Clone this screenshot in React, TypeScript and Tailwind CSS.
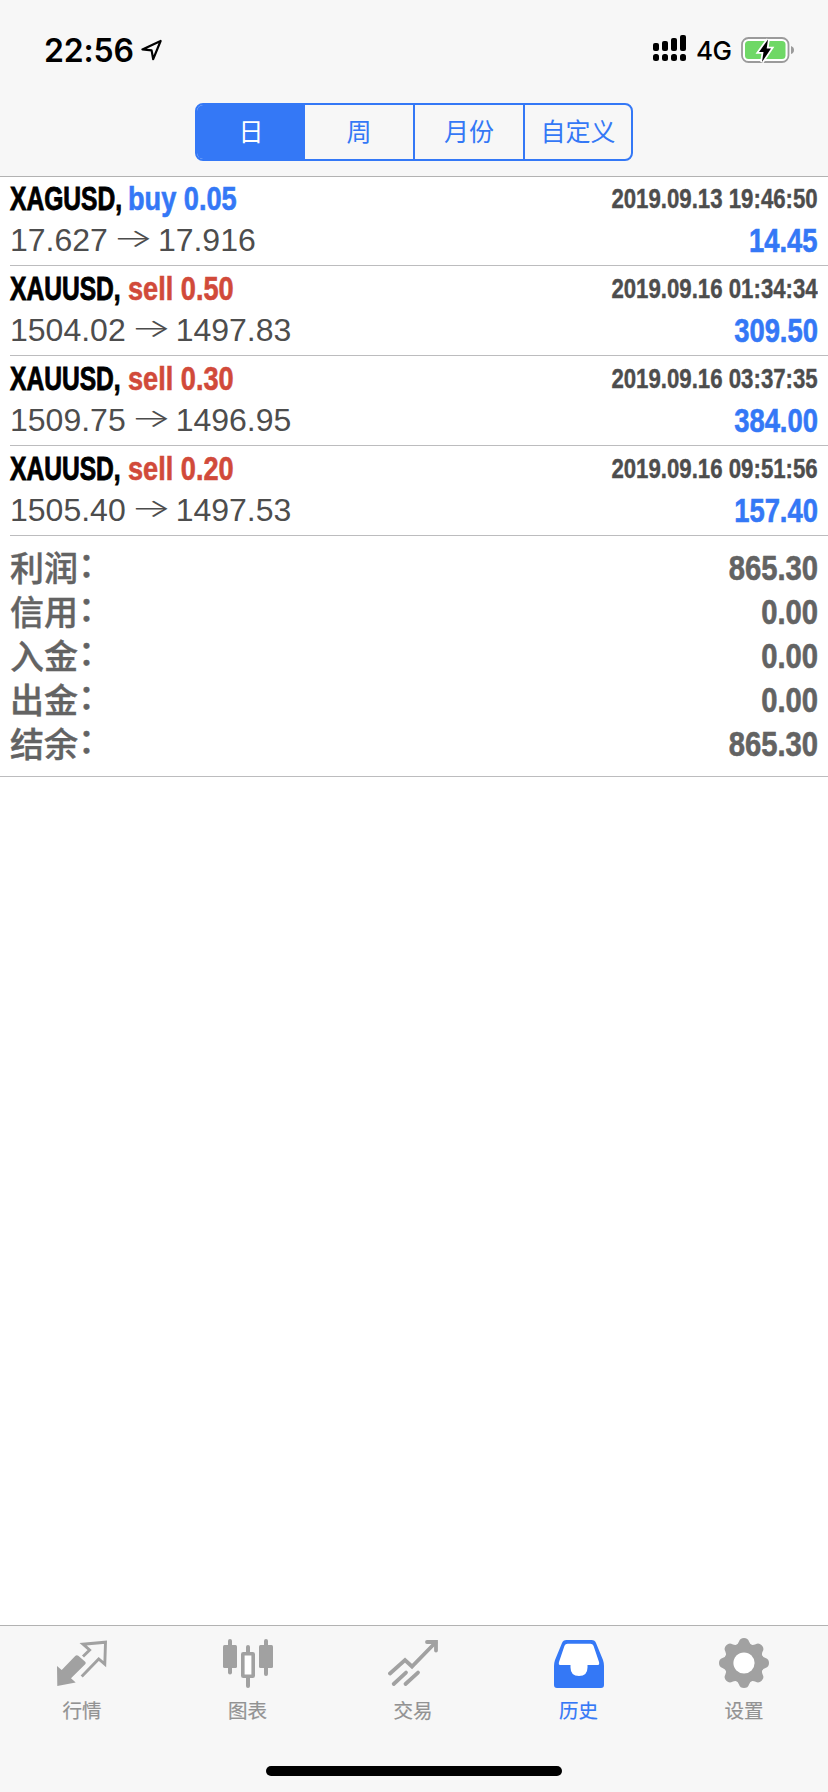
import type { ReactNode } from 'react';

type Side = 'buy' | 'sell';

interface Deal {
  symbol: string;
  side: Side;
  volume: string;
  open: string;
  close: string;
  time: string;
  profit: string;
}

const periods = [
  { label: '日', className: 'w-[108px] bg-[#3478f6] text-white' },
  { label: '周', className: 'w-[110px] border-r-2 border-[#3478f6] text-[#3478f6]' },
  { label: '月份', className: 'w-[110px] border-r-2 border-[#3478f6] text-[#3478f6]' },
  { label: '自定义', className: 'flex-1 text-[#3478f6]' },
];

const deals: Deal[] = [
  { symbol: 'XAGUSD', side: 'buy', volume: '0.05', open: '17.627', close: '17.916', time: '2019.09.13 19:46:50', profit: '14.45' },
  { symbol: 'XAUUSD', side: 'sell', volume: '0.50', open: '1504.02', close: '1497.83', time: '2019.09.16 01:34:34', profit: '309.50' },
  { symbol: 'XAUUSD', side: 'sell', volume: '0.30', open: '1509.75', close: '1496.95', time: '2019.09.16 03:37:35', profit: '384.00' },
  { symbol: 'XAUUSD', side: 'sell', volume: '0.20', open: '1505.40', close: '1497.53', time: '2019.09.16 09:51:56', profit: '157.40' },
];

const summary = [
  { label: '利润', value: '865.30' },
  { label: '信用', value: '0.00' },
  { label: '入金', value: '0.00' },
  { label: '出金', value: '0.00' },
  { label: '结余', value: '865.30' },
];

function StatusBar() {
  return (
    <div className="flex h-[103px] items-start justify-between pt-[30px] pr-[33px] pl-[44px]">
      <div className="flex h-10 items-center">
        <span className="w-[97px] pt-px font-['Inter',sans-serif] text-[32px] leading-10 font-semibold tracking-[-0.2px] whitespace-nowrap">
          22:56
        </span>
        <svg width="22" height="22" viewBox="0 0 22 22" fill="none" stroke="black" strokeWidth="2.2" strokeLinejoin="round">
          <path d="M1.4 10.4 L19.6 2 L12.2 20.2 L10.6 11.4 Z" />
        </svg>
      </div>
      <div className="flex h-10 items-center">
        <svg width="34" height="28" viewBox="0 0 34 28" className="-mt-[4px]">
          <rect x="0" y="9" width="6" height="8" rx="2" />
          <rect x="9" y="7" width="6" height="10" rx="2" />
          <rect x="18" y="4" width="6" height="13" rx="2" />
          <rect x="27" y="1" width="6" height="16" rx="2" />
          <rect x="0" y="20" width="6" height="7" rx="2.5" />
          <rect x="9" y="20" width="6" height="7" rx="2.5" />
          <rect x="18" y="20" width="6" height="7" rx="2.5" />
          <rect x="27" y="20" width="6" height="7" rx="2.5" />
        </svg>
        <span className="mt-[2px] ml-[9px] w-[45px] font-['Inter',sans-serif] text-[26px] leading-10 font-medium tracking-[-0.5px]">
          4G
        </span>
        <svg width="54" height="26" viewBox="0 0 54 26" className="-mt-px">
          <rect x="1" y="1" width="46.5" height="24" rx="6.5" fill="#fff" stroke="#9b9b9b" strokeWidth="1.8" />
          <rect x="4" y="4" width="40.5" height="18" rx="3.5" fill="#6fd866" />
          <path d="M50 9 Q53 10 53 13 Q53 16 50 17 Z" fill="#9b9b9b" />
          <path
            d="M27 2.5 L18 15 L22.5 15 L21 25 L30 11.5 L25.7 11.5 Z"
            fill="black"
            stroke="white"
            strokeWidth="3.6"
            paintOrder="stroke"
          />
        </svg>
      </div>
    </div>
  );
}

function PeriodTabs() {
  return (
    <div className="mx-auto flex h-[58px] w-[438px] overflow-hidden rounded-[8px] border-2 border-[#3478f6] text-[25px]">
      {periods.map(({ label, className }) => (
        <button key={label} className={`pt-[2px] ${className}`}>
          {label}
        </button>
      ))}
    </div>
  );
}

function DealRow({ deal }: { deal: Deal }) {
  return (
    <div className="ml-[10px] flex h-[90px] justify-between border-b border-[#bcbcbe] pr-[10px] first:h-[89px]">
      <div className="flex flex-col justify-end pb-1">
        {/* Condensed bold: the regular face squeezed horizontally */}
        <div className="flex text-[33px] leading-[40px] font-bold whitespace-nowrap">
          <span className="w-[118px] origin-left scale-x-[0.745] [-webkit-text-stroke:0.9px]">{deal.symbol},</span>
          <span
            className={`origin-left scale-x-[0.823] [-webkit-text-stroke:0.6px] ${
              deal.side === 'buy' ? 'text-[#3478f6]' : 'text-[#d14a3a]'
            }`}
          >
            {deal.side} {deal.volume}
          </span>
        </div>
        <div className="mt-px flex text-[32px] leading-[41px] text-[#4d4d4d]">
          {deal.open}
          <span className="w-[50px] -translate-y-[3px] scale-x-[1.35] scale-y-[0.8] text-center font-['Inter',sans-serif] font-light">
            →
          </span>
          {deal.close}
        </div>
      </div>
      <div className="flex flex-col items-end justify-end pb-1 font-bold whitespace-nowrap">
        <div className="origin-right scale-x-[0.823] text-[27px] leading-[41px] text-[#4d4d4d] [-webkit-text-stroke:0.4px]">
          {deal.time}
        </div>
        <div className="origin-right scale-x-[0.83] text-[33px] leading-[41px] text-[#3478f6] [-webkit-text-stroke:0.6px]">
          {deal.profit}
        </div>
      </div>
    </div>
  );
}

function Summary() {
  return (
    <div className="h-[241px] border-b border-[#bcbcbe] px-[10px] pt-[10px] text-[#636363]">
      {summary.map(({ label, value }) => (
        <div key={label} className="flex h-11 items-center justify-between">
          <span className="flex pt-[2px] text-[34px] leading-[44px] font-medium [-webkit-text-stroke:0.4px]">
            {label}
            <span className="-translate-y-[4px]">：</span>
          </span>
          <span className="origin-right scale-x-[0.835] text-[35px] leading-[44px] font-bold [-webkit-text-stroke:0.6px]">
            {value}
          </span>
        </div>
      ))}
    </div>
  );
}

function QuotesIcon() {
  return (
    <svg width="50" height="50" viewBox="0 0 50 50" fill="none">
      <path d="M0 28 L4.7 32 L18.2 18 Q19.7 16.4 21.3 17.8 L28.2 23.8 Q29.4 25 28.2 26.2 L14 40.3 L18.7 44.6 L0.3 48 Z" fill="#a1a1a1" />
      <path d="M26 18.5 L32.6 12 L26 6.2 L48.5 4.2 L47.8 26.2 L41.7 21 L24.7 38.5" stroke="#a1a1a1" strokeWidth="2.9" />
    </svg>
  );
}

function ChartIcon() {
  return (
    <svg width="50" height="50" viewBox="0 0 50 50" fill="#a1a1a1">
      <rect x="0" y="7" width="14" height="23" rx="1.5" />
      <rect x="5" y="1" width="4" height="35.5" rx="2" />
      <rect x="23" y="7" width="4" height="43" rx="2" />
      <rect x="19.8" y="15.8" width="10.4" height="22.4" rx="0.5" fill="#fff" stroke="#a1a1a1" strokeWidth="3.6" />
      <rect x="36" y="7" width="14" height="23" rx="1.5" />
      <rect x="41" y="1" width="4" height="37" rx="2" />
    </svg>
  );
}

function TradeIcon() {
  return (
    <svg width="50" height="50" viewBox="0 0 50 50" fill="none" stroke="#a1a1a1" strokeWidth="3.8" strokeLinecap="round">
      <path d="M2 35.5 L17 22 L24 28.5 L47.5 4.5" />
      <path d="M39 4 H48 V12.5" />
      <path d="M5.7 46 L18 34.6 M17.5 46 L30 34.6" />
    </svg>
  );
}

function HistoryIcon() {
  return (
    <svg width="50" height="50" viewBox="0 0 50 50">
      <path
        d="M12.5 2 H37.5 Q41 2 42 5 L49 22 Q50 25 50 28 V47 Q50 50 47 50 H3 Q0 50 0 47 V28 Q0 25 1 22 L8 5 Q9 2 12.5 2 Z"
        fill="#3478f6"
      />
      <path
        d="M13.5 5.7 H36.5 Q38.7 5.7 39.5 7.7 L45 24 Q45.7 27 44 27 H33.5 V29.5 Q33.5 38 25 38 Q16.5 38 16.5 29.5 V27 H6 Q4.3 27 5 24 L10.5 7.7 Q11.3 5.7 13.5 5.7 Z"
        fill="#fff"
      />
    </svg>
  );
}

function SettingsIcon() {
  const teeth = [0, 45, 90, 135, 180, 225, 270, 315];
  return (
    <svg width="50" height="50" viewBox="0 0 50 50" fill="#a1a1a1">
      <circle cx="25" cy="25" r="19.5" />
      {teeth.map((angle) => (
        <path
          key={angle}
          d="M16.5 7.5 Q19 6.5 20 3.5 Q21 0 25 0 Q29 0 30 3.5 Q31 6.5 33.5 7.5 L30 14 H20 Z"
          transform={`rotate(${angle} 25 25)`}
        />
      ))}
      <circle cx="25" cy="25" r="10.6" fill="#fff" />
    </svg>
  );
}

const tabs: { label: string; icon: ReactNode; active?: boolean }[] = [
  { label: '行情', icon: <QuotesIcon /> },
  { label: '图表', icon: <ChartIcon /> },
  { label: '交易', icon: <TradeIcon /> },
  { label: '历史', icon: <HistoryIcon />, active: true },
  { label: '设置', icon: <SettingsIcon /> },
];

function TabBar() {
  return (
    <nav className="flex h-[167px] flex-col items-center justify-between border-t border-[#b2b2b2] bg-[#f7f7f7] pt-[12px] pb-[16px]">
      <div className="flex w-full justify-between pr-[9px] pl-[7px]">
        {tabs.map(({ label, icon, active }) => (
          <button key={label} className={`flex w-[150px] flex-col items-center ${active ? 'text-[#3478f6]' : 'text-[#929292]'}`}>
            {icon}
            <span className="mt-[8px] text-[19.5px] leading-[30px] [-webkit-text-stroke:0.2px]">{label}</span>
          </button>
        ))}
      </div>
      <div className="h-[10px] w-[296px] rounded-full bg-black" />
    </nav>
  );
}

export default function App() {
  return (
    <div className="flex h-[1792px] w-[828px] flex-col bg-white font-['Liberation_Sans','Noto_Sans_CJK_SC',sans-serif] text-black">
      <header className="h-[177px] border-b border-[#b2b2b2] bg-[#f7f7f7]">
        <StatusBar />
        <PeriodTabs />
      </header>
      <main className="flex-1">
        <div>
          {deals.map((deal) => (
            <DealRow key={deal.time} deal={deal} />
          ))}
        </div>
        <Summary />
      </main>
      <TabBar />
    </div>
  );
}
